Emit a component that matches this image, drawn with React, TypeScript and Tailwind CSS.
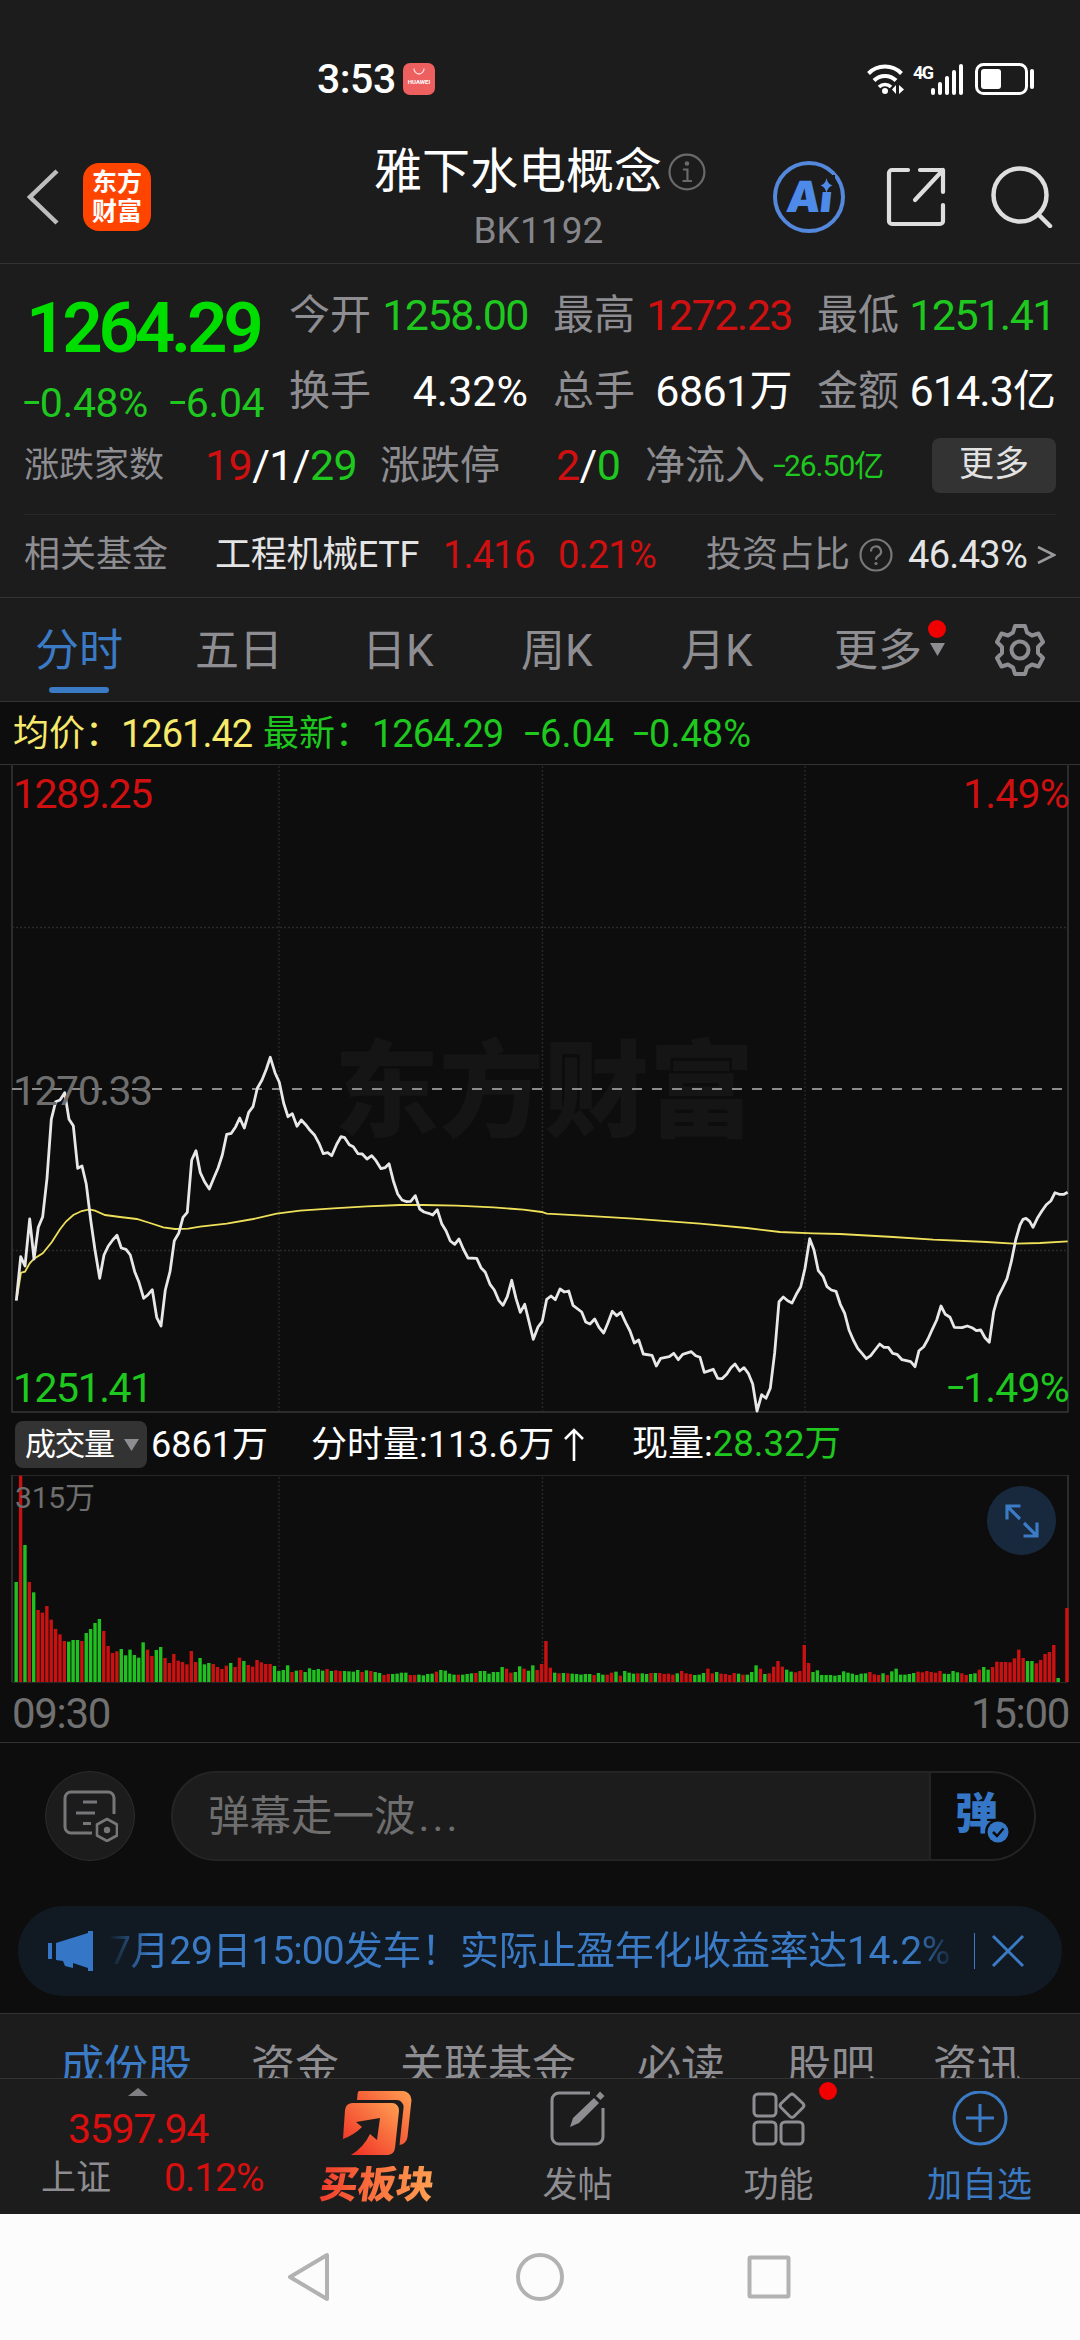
import { clsx } from "clsx";

// price line, x,y inside the 1080x648 chart
const PRICE =
  "16.3,536.7 20.7,492.7 25,502 29.7,455 34,495 38.3,463.3 42.7,452.7 47,414.3 51.3,355.3 55.7,337.7 60,336 64.7,328.7 69,355.3 73.3,361.7 77.7,404.3 82,402 86.3,420.3 90.7,456 95,486 99.7,514.3 104,491 108.3,482 112.7,476 117,471.3 121.3,484 126,485.3 130.3,491 134.7,507.7 139,518.3 143.7,534.3 148,530.7 152.3,525.7 156.7,553.3 161,562 165.3,526 170,507.7 174.3,476.7 178.7,469.3 183,453.3 187.3,448.3 191.7,396 196,386.7 200.3,408.7 204.7,418 209.3,425 213.7,414.3 218,404.3 222.3,391 226.7,370.3 231.3,369.3 235.7,362.7 239.7,354 244.3,364 248.7,348.3 253,342.7 257.3,324.3 262,316 266.3,305.3 270.3,293.3 275,308.7 279.3,318.3 283.7,339.3 288,352.7 292.3,349.7 297,362.3 301.3,356 305.7,360.7 310,366.3 314.7,371.3 319,379.3 323.3,389.7 327.7,388.7 331.7,391.7 336.7,380.3 341,372.7 344.7,373.7 349.3,380.7 353.3,382.7 358,389.7 362.3,390 367,395 371.7,391.7 376,396.7 381,404.7 385,403.7 389,399.7 393.3,416.7 397.7,430 402,436 406.7,437.7 410.7,437.3 415.3,431.7 419.7,445 424,448 428.7,449.3 432.7,451 437.3,445.7 441.7,459.7 446,466.7 450.3,477 454.7,480.3 459,475 463.3,485 468,494 476.7,494.3 481,503.7 485.3,508.3 490,520.3 494.3,526 498.7,536.3 503,541.3 507.3,532.7 511.7,516.3 516,534.3 520.3,548.3 524.7,540.3 529,557.7 533.3,575.3 538,563 542.3,557.3 546.7,535.3 551,532 555.3,535.7 560,525 564.3,528 568.7,527 573,541.3 581.7,548 585.7,558 590,560 594.7,555 599,563.3 603.7,569 608,558.7 612.3,547.3 616.7,551.7 621,548.3 625.7,558.7 630,567 634.3,579 638.7,576 643.3,590 652,591.3 656.3,602 660.7,594.3 669.3,592.7 673.7,589.3 678.3,595.7 682.7,590.3 691.3,587.7 695.7,591.7 700,593.3 704.3,608.3 713.3,605.3 717.7,614.3 722,614.7 726.7,610.3 731,603.7 735,600 739.7,607 744,603.7 748.3,609.3 752.7,620 757,647 761.7,630.7 766,634.3 770.3,624.3 774.7,588.7 779,537.7 783.3,533 787.7,536.7 792,539 796.3,530.3 800.7,522.7 805,504.3 809.7,474.7 814,486 818.3,506.7 823,512.3 827,522.7 831.3,526 836,527.3 840.3,540.3 844.7,549.3 849,566 853.3,576 857.7,584.3 862,589.3 866.3,594.7 870.7,591.7 875,586 879.7,580 884,583.3 888.3,583.3 892.7,589.3 897,590.3 902,595.7 910.7,597.7 915,602.7 919,586.7 923.7,582.7 928,575 932.3,565.3 936.7,556 941,542 945.3,550.3 950,553.3 954.3,563.3 962,563.7 967.3,562 972,563.7 976.3,566.7 980.7,566 985,573.7 989.3,578.3 993.7,547.7 998,532.7 1002.3,524.3 1007,514.7 1011.3,497.7 1015.7,476 1020,461 1023,455.3 1026,454.3 1029.7,457.3 1033,463.3 1037.3,454.3 1041.7,447.3 1046.3,440.7 1051,436.7 1055,428.7 1059.3,430.3 1064,430.3 1067.7,428.3";

const AVERAGE =
  "16.7,535.3 21,508.7 25,507.7 29.7,499.3 34,494.7 42.7,489.3 51.7,478.3 60,465.3 66,457.5 73.3,451 81.7,447 89.3,445.3 95,446.7 105,451 120,453 136.7,455 150,459 163.3,463.3 175,465 188.3,464.7 200,462.7 226.7,459.7 253.3,455 276.7,449.7 300,446.7 333.3,444.3 366.7,442.3 400,441 423.3,441 456.7,441.7 493.3,443.3 523.3,445.7 541.7,448 546.7,449.7 583.3,451.7 633.3,454.7 700,459.7 746.7,464 780,468 813.3,469.3 840,470 893.3,473 933.3,475.7 986.7,478 1013.3,479.7 1040,479 1067.7,477.3";

// bar tops, a third of a pixel each, measured against VOLUME_BASE; negative = falling minute (green)
const VOLUME_BASE = 816;
const VOLUME = [
  -516, 197, -405, 516, -547, 600, 608, 588, 629, 657, 673, 693, -695, -690, -690, 693, -669, -657, -639, -627,
  663, 708, 729, 724, -717, -736, -719, -735, -743, -697, 719, 738, -720, -711, 744, 759, 732, 752, 756, 763,
  723, 756, -744, -763, -759, 762, 771, 777, 767, -759, 771, 743, -753, 765, 770, 750, 757, 762, 762, -768,
  -783, -780, -766, 786, -782, 780, -786, -775, -780, -777, -782, 777, -783, 781, 783, -783, -784, -785, -780, 786,
  -781, 783, -786, -789, 795, 792, -792, -791, -788, -788, 795, 795, -794, -796, -792, -791, 785, -780, -782, -791,
  -794, 794, -794, -792, -790, 789, -783, -783, -791, -786, -786, -771, 776, 788, -786, -769, 776, -782, -766, 780,
  762, 693, 773, -788, 790, -789, 790, -791, -792, -794, -792, -792, 795, -789, -794, 794, 788, -785, 797, -783,
  -788, -791, 790, -790, -792, 789, -789, 789, 792, 791, 794, -790, 783, 790, 792, -795, -794, -789, 776, 790,
  -786, 791, 792, 795, 789, -791, 794, -794, -786, -766, 776, -792, 790, 770, 753, 770, -779, -785, 787, 783,
  705, 759, -786, -781, -795, -795, -795, -797, -795, -784, -788, -791, -795, -791, -790, 786, 793, 795, -790, 795,
  -784, -776, -794, -794, -792, -789, 785, 787, 783, 786, 788, 783, -791, -792, -783, -787, 790, 795, -792, -790,
  779, -771, -779, 771, 755, 756, 756, 757, 745, 719, 744, -753, -753, 760, 750, 732, 726, 705, -804, 816,
  594,
];

// wider, slightly raised minus sign in front of a number
function Minus() {
  return <span className="mx-[0.06em] inline-block -translate-y-[0.04em] scale-x-150">-</span>;
}

function StatusBar() {
  return (
    <div className="flex h-[130px] items-center pt-[28px] text-white">
      <span className="ml-[317px] w-[86px] text-[41px] leading-none font-medium tracking-[-0.5px]">3:53</span>
      <div className="flex h-8 w-8 flex-col items-center rounded-[7px] bg-[#ee5f5f] pt-[5px]">
        <svg width="12" height="8" viewBox="0 0 12 8" fill="none" stroke="#ffd9d9" strokeWidth="1.3">
          <path d="M1 0.5a5 5.5 0 0 0 10 0" />
        </svg>
        <span className="mt-[3px] text-[6px] leading-none font-bold">HUAWEI</span>
      </div>
      <svg className="ml-[432px]" width="38" height="32" viewBox="0 0 38 32" fill="none" stroke="#fff" strokeWidth="4">
        <path d="M1.5 10.5a23 23 0 0 1 33 0" />
        <path d="M7 17.5a15.5 15.5 0 0 1 22 0" />
        <path d="M12 24a8.5 8.5 0 0 1 12 0" strokeWidth="3.5" />
        <circle cx="18" cy="28" r="3" fill="#fff" stroke="none" />
        <path d="M29 22v9l-4-4.500zM32 22v9l5-4.500z" fill="#fff" stroke="none" />
      </svg>
      <div className="ml-[8px] flex items-start">
        <span className="w-[18px] text-[18px] leading-none font-bold tracking-[-1.500px]">4G</span>
        <svg width="32" height="31" viewBox="0 0 32 31" fill="#fff">
          <rect x="0" y="24" width="4" height="7" rx="2" />
          <rect x="7" y="18" width="4" height="13" rx="2" />
          <rect x="14" y="12" width="4" height="19" rx="2" />
          <rect x="21" y="6" width="4" height="25" rx="2" />
          <rect x="28" y="0" width="4" height="31" rx="2" />
        </svg>
      </div>
      <svg className="ml-3" width="62" height="32" viewBox="0 0 62 32" fill="none">
        <rect x="1.500" y="1.500" width="50" height="29" rx="7" stroke="#fff" strokeWidth="3" />
        <rect x="6" y="6" width="20" height="20" rx="3" fill="#fff" />
        <path d="M57 8v16" stroke="#fff" strokeWidth="4" strokeLinecap="round" />
      </svg>
    </div>
  );
}

function Header() {
  return (
    <header className="flex h-[134px] items-center border-b border-[#333]">
      <svg className="ml-[26px]" width="33" height="56" viewBox="0 0 33 56" fill="none" stroke="#bdbdbd" strokeWidth="4.500">
        <path d="M31 2 4 28l27 26" />
      </svg>
      <div className="ml-6 flex h-[68px] w-[68px] flex-col items-center justify-center gap-1 rounded-2xl bg-[#ff4400] text-[25px] leading-none font-bold text-white">
        <span>东方</span>
        <span>财富</span>
      </div>
      <div className="ml-[223px] flex w-[332px] flex-col gap-[16px] pt-[4px]">
        <div className="flex items-center">
          <h1 className="w-[295px] text-[48px] leading-none text-white">雅下水电概念</h1>
          <svg width="38" height="38" viewBox="0 0 38 38" fill="none" stroke="#6a6a6c" strokeWidth="2.200">
            <circle cx="19" cy="19" r="17.500" />
            <circle cx="19" cy="10.500" r="2.300" fill="#6a6a6c" stroke="none" />
            <path d="M15 16.500h4.500v11M14.500 28h9.500" />
          </svg>
        </div>
        <span className="pr-[3px] text-center text-[37px] leading-none tracking-[0.1px] text-[#85858a]">BK1192</span>
      </div>
      <div className="relative ml-[67px] flex h-[72px] w-[72px] items-center justify-center rounded-full border-[4px] border-[#5488dd]">
        <span className="-skew-x-6 font-[Inter] text-[43px] leading-none font-black tracking-[-1px] text-[#4d8ae9]">Ai</span>
        {/* spark in place of the dot */}
        <svg className="absolute top-[10px] left-[41px]" width="17" height="19" viewBox="0 0 17 19">
          <rect width="17" height="17" fill="#1c1c1c" />
          <path d="M8.500 3q1 6 6 7.500-5 1.500-6 8-1-6.500-6-8 5-1.500 6-7.500z" fill="#4d8ae9" />
        </svg>
      </div>
      <svg className="ml-[41px]" width="60" height="60" viewBox="0 0 60 60" fill="none" stroke="#dedede" strokeWidth="4.200" strokeLinecap="round" strokeLinejoin="round">
        <path d="M22 3H6a3 3 0 0 0-3 3v48a3 3 0 0 0 3 3h48a3 3 0 0 0 3-3V38" />
        <path d="M34 3h23v22M57 3 29 33" />
      </svg>
      <svg className="ml-[45px]" width="62" height="62" viewBox="0 0 62 62" fill="none" stroke="#dedede" strokeWidth="4.500" strokeLinecap="round">
        <circle cx="29" cy="29" r="26.500" />
        <path d="m48 49 11 11" />
      </svg>
    </header>
  );
}

function Stat({ label, value, tone }: { label: string; value: string; tone: string }) {
  return (
    <div className="flex h-[76px] items-center justify-between whitespace-nowrap">
      <span className="text-[41px] leading-none text-[#8d8d92]">{label}</span>
      <span className={clsx("text-[43px] leading-none", tone)}>{value}</span>
    </div>
  );
}

function Quote() {
  return (
    <section className="border-b border-[#333] pt-[13px] pb-1">
      <div className="flex">
        <div className="w-[289px] whitespace-nowrap">
          <div className="flex h-[101px] items-center pl-[26px] text-[71px] leading-none font-semibold tracking-[-4.300px] text-[#00de00]">
            1264.29
          </div>
          <div className="flex h-[51px] items-center pl-[24px] text-[41px] leading-none tracking-[-0.4px] text-[#1ec81e]">
            <span className="w-[146px]">
              <Minus />
              0.48%
            </span>
            <span>
              <Minus />
              6.04
            </span>
          </div>
        </div>
        <div className="grid grid-cols-[239px_239px_238px] gap-x-[25px]">
          <Stat label="今开" value="1258.00" tone="text-[#1ec81e] tracking-[-1.5px]" />
          <Stat label="最高" value="1272.23" tone="text-[#d01010] tracking-[-1.5px]" />
          <Stat label="最低" value="1251.41" tone="text-[#1ec81e] tracking-[-1.5px]" />
          <Stat label="换手" value="4.32%" tone="text-white" />
          <Stat label="总手" value="6861万" tone="text-white tracking-[-0.6px]" />
          <Stat label="金额" value="614.3亿" tone="text-white tracking-[-0.9px]" />
        </div>
      </div>

      <div className="flex h-[73px] items-center pr-6 pl-6 leading-none whitespace-nowrap text-[#8d8d92]">
        <span className="w-[181px] text-[35px]">涨跌家数</span>
        <span className="w-[175px] text-[43px] tracking-[-0.6px] text-white">
          <span className="text-[#d01010]">19</span>/1/<span className="text-[#1ec81e]">29</span>
        </span>
        <span className="w-[176px] text-[40px]">涨跌停</span>
        <span className="w-[89px] text-[43px] tracking-[-0.6px] text-white">
          <span className="text-[#d01010]">2</span>/<span className="text-[#1ec81e]">0</span>
        </span>
        <span className="w-[128px] text-[40px]">净流入</span>
        <span className="text-[30px] tracking-[-1px] text-[#1ec81e]">
          <Minus />
          26.50亿
        </span>
        <button className="ml-auto h-[55px] w-[124px] rounded-lg bg-[#333] pb-[2px] text-[35px] text-[#e2e2e2]">更多</button>
      </div>

      <div className="mx-6 mt-3 h-px bg-[#282828]" />

      <div className="flex h-[78px] items-center pt-[2px] pl-6 text-[36px] leading-none whitespace-nowrap text-[#8d8d92]">
        <span className="w-[191px]">相关基金</span>
        <span className="w-[228px] tracking-[-0.3px] text-[#e4e4e4]">工程机械ETF</span>
        <span className="w-[115px] text-[38px] tracking-[-0.8px] text-[#d01010]">1.416</span>
        <span className="w-[148px] text-[38px] tracking-[-0.8px] text-[#d01010]">0.21%</span>
        <span className="w-[153px]">投资占比</span>
        <svg width="34" height="34" viewBox="0 0 34 34" fill="none" stroke="#78787b" strokeWidth="2.200">
          <circle cx="17" cy="17" r="15.500" />
          <path d="M12 13.500a5 5 0 1 1 7.500 4.200c-1.800 1-2.500 2-2.500 4" />
          <circle cx="17" cy="25.500" r="1.600" fill="#78787b" stroke="none" />
        </svg>
        <span className="ml-[15px] w-[129px] text-[38px] tracking-[-0.7px] text-[#e4e4e4]">46.43%</span>
        <svg width="19" height="18" viewBox="0 0 19 18" fill="none" stroke="#9a9a9e" strokeWidth="2.600">
          <path d="m1 1 16 8L1 17" />
        </svg>
      </div>
    </section>
  );
}

function PeriodTabs() {
  return (
    <nav className="flex h-[104px] items-center border-b border-[#333] pt-[2px] pl-[35px] text-[44px] leading-none whitespace-nowrap text-[#8d8d92]">
      <div className="relative w-[160px] text-[#3b7ac4]">
        分时
        <span className="absolute top-[58px] left-[14px] h-[6px] w-[60px] rounded-full bg-[#3b7ac4]" />
      </div>
      <span className="w-[167px]">五日</span>
      <span className="w-[159px]">日K</span>
      <span className="w-[160px]">周K</span>
      <span className="w-[153px]">月K</span>
      <div className="relative w-[160px]">
        更多
        <span className="absolute top-[-9px] left-[94px] h-[18px] w-[18px] rounded-full bg-[#f00000]" />
        <svg className="absolute top-[14px] left-[96px]" width="15" height="13" viewBox="0 0 15 13">
          <path d="M0 0h15L7.500 13z" fill="#8d8d92" />
        </svg>
      </div>
      <svg className="-mt-[2px]" width="52" height="54" viewBox="0 0 52 54" fill="none" stroke="#8d8d92" strokeWidth="4">
        <path d="M21 3h10l2 6.500 5 3 6.500-2L49 19l-5 5v6l5 5-4.500 8.500-6.500-2-5 3L31 51H21l-2-6.500-5-3-6.500 2L3 35l5-5v-6l-5-5 4.500-8.500 6.500 2 5-3z" strokeLinejoin="round" />
        <circle cx="26" cy="27" r="8.500" />
      </svg>
    </nav>
  );
}

function PriceChart() {
  return (
    <section>
      <div className="flex h-[62px] items-center pt-[2px] pl-[13px] text-[36px] leading-none whitespace-nowrap text-[#1ec81e]">
        <span className="w-[108px] text-[#f6e96b]">均价：</span>
        <span className="w-[142px] text-[38px] tracking-[-1px] text-[#f6e96b]">1261.42</span>
        <span className="w-[109px]">最新：</span>
        <span className="w-[153px] text-[38px] tracking-[-1px]">1264.29</span>
        <span className="w-[109px] text-[38px]">
          <Minus />
          6.04
        </span>
        <span className="text-[38px]">
          <Minus />
          0.48%
        </span>
      </div>
      <div className="relative h-[650px] text-[41px] leading-none tracking-[-1.500px]">
        <span className="absolute top-[276px] left-[334px] text-[105px] font-black tracking-[0px] text-[#151515]">东方财富</span>
        <svg className="absolute inset-0" width="1080" height="650" viewBox="0 0 1080 650" fill="none">
          <path d="M0 .500h1080" stroke="#333" />
          <path d="M12 0v648h1056V0" stroke="#2c2c2c" strokeWidth="2" />
          <path d="M279 2v645M542.500 2v645M805 2v645M12 163.500h1056M12 486.500h1056" stroke="#2a2a2a" strokeWidth="1.300" strokeDasharray="2 2" />
          <path d="M12 325h1056" stroke="#8c8c8c" strokeWidth="1.800" strokeDasharray="10 10" />
          <polyline points={AVERAGE} stroke="#efe05a" strokeWidth="1.800" />
          <polyline points={PRICE} stroke="#e8e8e8" strokeWidth="2.800" strokeLinejoin="round" />
        </svg>
        <span className="absolute top-[10px] left-[13px] text-[#d01010]">1289.25</span>
        <span className="absolute top-[10px] right-[11px] tracking-[-0.8px] text-[#d01010]">1.49%</span>
        <span className="absolute top-[307px] left-[13px] text-[#6e6e6e]">1270.33</span>
        <span className="absolute top-[604px] left-[13px] text-[#1ec81e]">1251.41</span>
        <span className="absolute top-[604px] right-[11px] tracking-[-0.8px] text-[#1ec81e]">
          <Minus />
          1.49%
        </span>
      </div>
    </section>
  );
}

function VolumeChart() {
  return (
    <section className="border-b border-[#333]">
      <div className="flex h-[61px] items-center pl-[15px] text-[36px] leading-none whitespace-nowrap text-white">
        <button className="flex h-[47px] w-[132px] items-center rounded-lg bg-[#333] pl-[10px] text-[31px] tracking-[-1.500px]">
          成交量
          <svg className="ml-[10px]" width="15" height="12" viewBox="0 0 15 12">
            <path d="M0 0h15L7.500 12z" fill="#8d8d92" />
          </svg>
        </button>
        <span className="ml-1 w-[160px]">6861万</span>
        <span className="w-[253px]">分时量:113.6万</span>
        <svg className="mr-[48px]" width="20" height="34" viewBox="0 0 20 34" fill="none" stroke="#fff" strokeWidth="2.600">
          <path d="M10 33V2M1 11l9-9 9 9" />
        </svg>
        <span>
          现量:<span className="text-[36.500px] text-[#1ec81e]">28.32万</span>
        </span>
      </div>
      <div className="relative h-[208px]">
        <svg width="1080" height="208" viewBox="0 0 1080 208" fill="none">
          <path d="M12 .500h1056M12 207.500h1056" stroke="#272727" />
          <path d="M12 0v207M1068 0v207" stroke="#2c2c2c" strokeWidth="2" />
          <path d="M279 2v205M542.500 2v205M805 2v205" stroke="#2a2a2a" strokeWidth="1.300" strokeDasharray="2 2" />
          {VOLUME.map((v, i) => {
            const h = (VOLUME_BASE - Math.abs(v)) / 3;
            return <rect key={i} x={14.500 + i * 4.378} y={207 - h} width="3.400" height={h} fill={v < 0 ? "#1fc01f" : "#c81111"} />;
          })}
        </svg>
        <span className="absolute top-[8px] left-[15px] text-[30px] leading-none tracking-[-0.2px] text-[#6e6e6e]">315万</span>
        <button className="absolute top-[11px] left-[987px] flex h-[69px] w-[69px] items-center justify-center rounded-full bg-[#18293e]">
          <svg width="34" height="34" viewBox="0 0 34 34" fill="none" stroke="#3b7ac4" strokeWidth="3.200">
            <path d="M15.500 2H2v13.500M2 2l13 13M18.500 32H32V18.500M32 32 19 19" />
          </svg>
        </button>
      </div>
      <div className="flex h-[59px] items-center justify-between pt-[2px] pr-[11px] pl-[12px] text-[42px] leading-none tracking-[-1.300px] text-[#707070]">
        <span>09:30</span>
        <span>15:00</span>
      </div>
    </section>
  );
}

function Danmaku() {
  return (
    <section className="flex h-[146px] items-center pl-[45px]">
      <button className="flex h-[90px] w-[90px] items-center justify-center rounded-full border border-[#2c2c2c] bg-[#1c1c1c]">
        <svg width="56" height="52" viewBox="0 0 56 52" fill="none" stroke="#77777a" strokeWidth="3">
          <path d="M30 43H9a6 6 0 0 1-6-6V8a6 6 0 0 1 6-6h37a6 6 0 0 1 6 6v16" />
          <path d="M21 12h14M14 23h19M21 33.500h8" />
          <path d="m45 29 10 5.500v11L45 51l-10-5.500v-11z" strokeWidth="2.600" strokeLinejoin="round" />
          <circle cx="45" cy="40" r="3.200" fill="#77777a" stroke="none" />
        </svg>
      </button>
      <div className="ml-9 flex h-[90px] w-[865px] items-center overflow-hidden rounded-full border-2 border-[#242424] bg-[#1c1c1c]">
        <span className="w-[756px] pt-[2px] pl-[35px] text-[41.500px] leading-none text-[#6e6e6e]">
          弹幕走一波<span className="ml-[3px] tracking-[3px]">...</span>
        </span>
        <div className="relative h-full flex-1 border-l-2 border-[#242424] bg-[#0d0d0d] pt-[20px] pl-[24px]">
          <span className="block text-[43px] leading-none font-black text-[#3577c6]">弹</span>
          <svg className="absolute top-[46px] left-[54px]" width="26" height="26" viewBox="0 0 26 26" fill="none">
            <circle cx="13" cy="13" r="13" fill="#0d0d0d" />
            <circle cx="13" cy="13" r="10.500" fill="#3577c6" />
            <path d="m8 13 4 4 6.500-7.500" stroke="#0d0d0d" strokeWidth="2.500" />
          </svg>
        </div>
      </div>
    </section>
  );
}

function Notice() {
  return (
    <section className="flex h-[125px] items-center border-b border-[#333] px-[18px]">
      <div className="flex h-[90px] w-full items-center rounded-full bg-[#111a23] text-[#3b7ac4]">
        <svg className="ml-[30px]" width="46" height="40" viewBox="0 0 46 40" fill="#3577c6">
          <path d="M0 12h4v16H0zM8 12 40 2V0h5v40h-5v-3l-15-5v5l-8-2-2-5-7-1z" />
        </svg>
        <div className="ml-[15px] w-[848px] overflow-hidden text-[39px] leading-[1.3] tracking-[-0.3px] whitespace-nowrap [mask-image:linear-gradient(to_right,transparent,#000_40px,#000_805px,transparent)]">
          7月29日<span className="tracking-[-0.9px]">15:00</span>发车！实际止盈年化收益率达14.2%
        </div>
        <div className="ml-[17px] h-9 w-px bg-[#3b7ac4]" />
        <svg className="ml-[16px]" width="34" height="34" viewBox="0 0 34 34" stroke="#3b7ac4" strokeWidth="3">
          <path d="m2 2 30 30M32 2 2 32" />
        </svg>
      </div>
    </section>
  );
}

function SectionTabs() {
  return (
    <nav className="flex h-[65px] overflow-hidden border-b border-[#333] bg-[#1c1c1c] pt-[31px] pl-[60px] text-[44px] leading-none whitespace-nowrap text-[#8d8d92]">
      <span className="w-[191px] shrink-0 text-[#3b7ac4]">成份股</span>
      <span className="w-[149px] shrink-0">资金</span>
      <span className="w-[237px] shrink-0">关联基金</span>
      <span className="w-[150px] shrink-0">必读</span>
      <span className="w-[146px] shrink-0">股吧</span>
      <span className="shrink-0">资讯</span>
    </nav>
  );
}

function BottomBar() {
  return (
    <footer className="flex h-[135px] bg-[#1c1c1c] text-[35px] leading-none whitespace-nowrap text-[#8d8d92]">
      <div className="w-[276px] pt-[9px]">
        <svg className="mx-auto" width="20" height="8" viewBox="0 0 20 8">
          <path d="M10 0 20 8H0z" fill="#808084" />
        </svg>
        <p className="mt-[13px] text-center text-[41px] leading-none tracking-[-1.300px] text-[#d80f0f]">3597.94</p>
        <div className="mt-[8px] flex h-10 items-center pl-[41px]">
          <span className="w-[123px]">上证</span>
          <span className="text-[39px] tracking-[-1px] text-[#d80f0f]">0.12%</span>
        </div>
      </div>

      <div className="flex w-[201px] flex-col items-center pt-3">
        <svg width="70" height="64" viewBox="0 0 70 64">
          <defs>
            <linearGradient id="hot" x1="0" y1="1" x2="1" y2="0">
              <stop offset="0.100" stopColor="#f03226" />
              <stop offset="1" stopColor="#ffa052" />
            </linearGradient>
          </defs>
          <path d="M17 0h43a9 9 0 0 1 9.500 9l-4 37a9 9 0 0 1-8 8l4-37a7 7 0 0 0-7-8H15l.500-5a5 5 0 0 1 1.500-4z" fill="url(#hot)" />
          <path d="M10 12h40a7 7 0 0 1 7 8l-4 37a8 8 0 0 1-7 7H9q13-8 19-21l7 6 3-22-24 4 6 5Q12 44 1 48l2-29a8 8 0 0 1 7-7z" fill="url(#hot)" />
        </svg>
        <span className="mt-[11px] ml-[2px] -skew-x-8 bg-linear-to-r from-[#f03a2c] to-[#ffa052] bg-clip-text text-[38px] leading-none font-black text-transparent">
          买板块
        </span>
      </div>

      <div className="flex w-[201px] flex-col items-center pt-3">
        <svg className="mb-[13px]" width="56" height="64" viewBox="0 0 56 64" fill="none" stroke="#8d8d92" strokeWidth="3">
          <path d="M40 2H9a7 7 0 0 0-7 7v37a7 7 0 0 0 7 7h37a7 7 0 0 0 7-7V17" />
          <path d="m20 36 3-9L44 7l5 5-20 20zM46 5l4-4.500 4.500 4.500-4 4z" fill="#8d8d92" stroke="none" />
        </svg>
        <span>发帖</span>
      </div>

      <div className="flex w-[201px] flex-col items-center pt-3">
        <div className="relative mb-[13px]">
          <svg width="54" height="64" viewBox="0 0 54 64" fill="none" stroke="#8d8d92" strokeWidth="3">
            <rect x="2" y="3" width="22" height="22" rx="4" />
            <rect x="2" y="31" width="22" height="22" rx="4" />
            <rect x="29" y="31" width="22" height="22" rx="4" />
            <path d="m38 4-9 8.500a3 3 0 0 0 0 4l9 9a3 3 0 0 0 4 0l9-9a3 3 0 0 0 0-4L42 4a3 3 0 0 0-4 0z" />
          </svg>
          <span className="absolute top-[-9px] left-[67px] h-[18px] w-[18px] rounded-full bg-[#f00000]" />
        </div>
        <span>功能</span>
      </div>

      <div className="flex w-[201px] flex-col items-center pt-3 text-[#3b7ac4]">
        <svg className="mb-[13px]" width="56" height="64" viewBox="0 0 56 64" fill="none" stroke="#3b7ac4" strokeWidth="3">
          <circle cx="28" cy="27" r="26" />
          <path d="M14 27h28M28 13v28" />
        </svg>
        <span>加自选</span>
      </div>
    </footer>
  );
}

function SystemNav() {
  return (
    <div className="flex h-[126px] items-center bg-[#fcfcfc] pl-[286px]">
      <svg width="44" height="52" viewBox="0 0 44 52" fill="none" stroke="#b2b2b2" strokeWidth="4" strokeLinejoin="round">
        <path d="M41 4v44L4 26z" />
      </svg>
      <svg className="ml-[185px]" width="50" height="50" viewBox="0 0 50 50" fill="none" stroke="#b2b2b2" strokeWidth="4">
        <circle cx="25" cy="25" r="22" />
      </svg>
      <svg className="ml-[182px]" width="44" height="44" viewBox="0 0 44 44" fill="none" stroke="#b2b2b2" strokeWidth="4">
        <rect x="2.500" y="2.500" width="39" height="39" rx="1" />
      </svg>
    </div>
  );
}

export default function App() {
  return (
    <div className="h-[2340px] w-[1080px] overflow-hidden bg-[#0d0d0d] font-[Roboto,'Noto_Sans_CJK_SC',sans-serif]">
      <div className="bg-[#1c1c1c]">
        <StatusBar />
        <Header />
        <Quote />
        <PeriodTabs />
      </div>
      <PriceChart />
      <VolumeChart />
      <Danmaku />
      <Notice />
      <SectionTabs />
      <BottomBar />
      <SystemNav />
    </div>
  );
}
